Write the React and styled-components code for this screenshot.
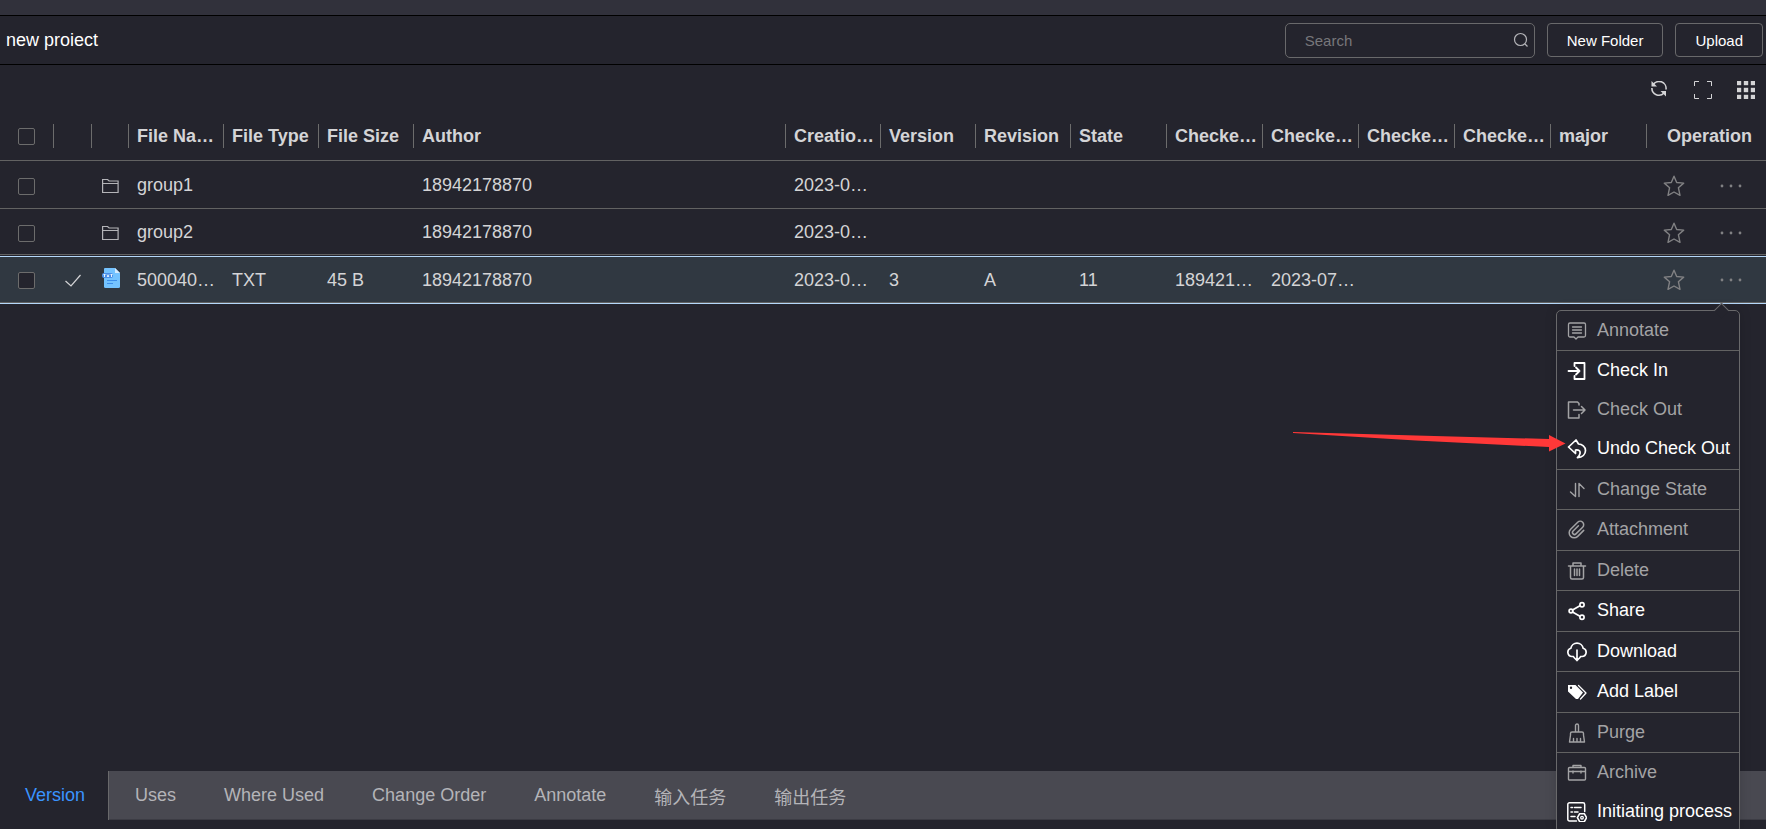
import React from 'react'
import styled, { createGlobalStyle, css } from 'styled-components'

const columns = [
  { key: 'name', label: 'File Na…', width: 95 },
  { key: 'type', label: 'File Type', width: 95 },
  { key: 'size', label: 'File Size', width: 95 },
  { key: 'author', label: 'Author' },
  { key: 'created', label: 'Creatio…', width: 95 },
  { key: 'version', label: 'Version', width: 95 },
  { key: 'revision', label: 'Revision', width: 95 },
  { key: 'state', label: 'State', width: 96 },
  { key: 'checkedBy', label: 'Checke…', width: 96 },
  { key: 'checkedAt', label: 'Checke…', width: 96 },
  { key: 'checkedIn', label: 'Checke…', width: 96 },
  { key: 'checkedNote', label: 'Checke…', width: 96 },
  { key: 'major', label: 'major', width: 96 },
]

const files = [
  { id: 1, kind: 'folder', name: 'group1', author: '18942178870', created: '2023-0…' },
  { id: 2, kind: 'folder', name: 'group2', author: '18942178870', created: '2023-0…' },
  {
    id: 3,
    kind: 'txt',
    selected: true,
    name: '500040…',
    type: 'TXT',
    size: '45 B',
    author: '18942178870',
    created: '2023-0…',
    version: '3',
    revision: 'A',
    state: '11',
    checkedBy: '189421…',
    checkedAt: '2023-07…',
  },
]

const menuGroups = [
  [{ label: 'Annotate', icon: 'annotate', disabled: true }],
  [
    { label: 'Check In', icon: 'checkIn' },
    { label: 'Check Out', icon: 'checkOut', disabled: true },
    { label: 'Undo Check Out', icon: 'undo' },
  ],
  [{ label: 'Change State', icon: 'state', disabled: true }],
  [{ label: 'Attachment', icon: 'attachment', disabled: true }],
  [{ label: 'Delete', icon: 'trash', disabled: true }],
  [{ label: 'Share', icon: 'share' }],
  [{ label: 'Download', icon: 'download' }],
  [{ label: 'Add Label', icon: 'label' }],
  [{ label: 'Purge', icon: 'purge', disabled: true }],
  [
    { label: 'Archive', icon: 'archive', disabled: true },
    { label: 'Initiating process', icon: 'process' },
  ],
]

const tabs = ['Version', 'Uses', 'Where Used', 'Change Order', 'Annotate', '输入任务', '输出任务']

// 20x20 drawings for the context menu
const menuIcons = {
  annotate: (
    <>
      <path d="M3 2h14a1.500 1.500 0 0 1 1.500 1.500v11a1.500 1.500 0 0 1-1.500 1.500h-6l-2 2-2-2H3a1.500 1.500 0 0 1-1.500-1.500v-11A1.500 1.500 0 0 1 3 2z" />
      <path d="M5.500 6h9M5.500 9h9M5.500 12h9" />
    </>
  ),
  checkIn: (
    <path strokeWidth="1.800" d="M7.500 5V2h10v16h-10v-3M1.500 10h11M9 6.500l3.500 3.500L9 13.500" />
  ),
  checkOut: (
    <path strokeWidth="1.500" d="M12 5V3.500L10.500 2h-9v16h10.500v-3.500M6.500 10H18M14.500 6.500L18 10l-3.500 3.500" />
  ),
  undo: (
    <path
      strokeWidth="1.700"
      d="M9 1L1.500 8l7 6.500v-3.500c3.500-.3 5 1 4.500 3.500-.3 1.500-1 2.700-2.500 4.200 5-.5 8-3.500 8-7.200 0-4-3.500-6.300-7-6.500z"
    />
  ),
  state: <path strokeWidth="1.400" d="M8.500 3.500v13L3.500 12M12 16.500v-13l5 5" />,
  attachment: (
    <path
      transform="rotate(45 10 10)"
      strokeWidth="1.500"
      d="M15 5.500v8.500a5 5 0 0 1-10 0V4a3.500 3.500 0 0 1 7 0v9.500a2 2 0 0 1-4 0V6"
    />
  ),
  trash: (
    <path
      strokeWidth="1.500"
      d="M1.500 5h17M6 5V2h8v3M3.500 5v11.500a1.500 1.500 0 0 0 1.500 1.500h10a1.500 1.500 0 0 0 1.500-1.500V5M7.500 8v6.500M10 8v6.500M12.500 8v6.500"
    />
  ),
  share: (
    <>
      <path strokeWidth="1.700" d="M5.500 9l7-4M5.500 11l7 4" />
      <circle cx="4" cy="10" r="1.900" strokeWidth="1.700" />
      <circle cx="15" cy="3.700" r="2.100" strokeWidth="1.700" />
      <circle cx="15" cy="16.300" r="2.100" strokeWidth="1.700" />
    </>
  ),
  download: (
    <path
      strokeWidth="1.700"
      d="M6.500 14.500H5A4.200 4.200 0 0 1 3.800 6.300 6.300 6.300 0 0 1 16.200 6.300 4.200 4.200 0 0 1 15 14.500h-1.500M10 8v10.500M7 15.500l3 3 3-3"
    />
  ),
  label: (
    <>
      <path
        fill="currentColor"
        stroke="none"
        fillRule="evenodd"
        d="M1 3h7.500l7.500 7.500-5 6.500L9 17 1 9.500zM4 4.500a1.200 1.200 0 1 0 0 2.400 1.200 1.200 0 0 0 0-2.400z"
      />
      <path strokeWidth="1.300" d="M11.500 3.500l7.500 7.500-5.500 6" />
    </>
  ),
  purge: (
    <path
      strokeWidth="1.400"
      d="M8.500 9V2.500a1.500 1.500 0 0 1 3 0V9M3.500 12V10.500A1.500 1.500 0 0 1 5 9h10a1.500 1.500 0 0 1 1.500 1.500V12M3.500 12L2.500 19h15L16.500 12M6.500 19v-3.500M10 19v-3.500M13.500 19v-3.500"
    />
  ),
  archive: (
    <path
      strokeWidth="1.400"
      d="M2.500 4.500h15a1 1 0 0 1 1 1V16a1 1 0 0 1-1 1h-15a1 1 0 0 1-1-1V5.500a1 1 0 0 1 1-1zM6 4.500V2.500h8v2M1.500 8.500h17M6 8v2M14 8v2"
    />
  ),
  process: (
    <>
      <path
        strokeWidth="1.500"
        d="M9.500 19H2.500A1.700 1.700 0 0 1 .8 17.300V2.500A1.700 1.700 0 0 1 2.500.8h13.500a1.700 1.700 0 0 1 1.700 1.700V9.500M4 5.500h1.500M7.500 5.500h6.500M4 10h1.500M7.500 10h3.500M4 14.500h4"
      />
      <path strokeWidth="1.600" d="M12.700 11.700h4.600l2.300 4-2.300 4h-4.600l-2.300-4z" />
      <circle cx="15" cy="15.700" r="1.300" />
    </>
  ),
}

export default function App() {
  return (
    <Page>
      <GlobalStyle />
      <TopStrip />
      <TitleBar>
        <Title>new proiect</Title>
        <Actions>
          <SearchBox>
            <SearchInput type="text" placeholder="Search" aria-label="Search" />
            <SearchIcon viewBox="0 0 16 16">
              <circle cx="7.500" cy="7.500" r="6" />
              <path d="M12 12l2.500 2.500" />
            </SearchIcon>
          </SearchBox>
          <BarButton type="button">New Folder</BarButton>
          <BarButton type="button">Upload</BarButton>
        </Actions>
      </TitleBar>

      <Tools>
        <ToolButton type="button" aria-label="Refresh">
          <ToolIcon viewBox="0 0 18 18">
            <path strokeWidth="1.600" d="M2 4A7 7 0 0 1 15 8.500M.9 7A7 7 0 0 0 13 12" />
            <path fill="#d4d4d6" stroke="none" d="M.5 0v5.500H6zM15 15.500V10H9.500z" />
          </ToolIcon>
        </ToolButton>
        <ToolButton type="button" aria-label="Full screen">
          <ToolIcon viewBox="0 0 18 18">
            <path d="M.5 5V.5H5M13 .5h4.500V5M17.500 13v4.500H13M5 17.500H.5V13" />
          </ToolIcon>
        </ToolButton>
        <ToolButton type="button" aria-label="Columns">
          <ToolIcon viewBox="0 0 18 18">
            {[0, 7, 14].map((y) =>
              [0, 7, 14].map((x) => (
                <rect key={x + '-' + y} x={x} y={y} width="4" height="4" fill="#d4d4d6" strokeWidth=".4" />
              ))
            )}
          </ToolIcon>
        </ToolButton>
      </Tools>

      <FileTable>
        <colgroup>
          <Col $width={54} />
          <Col $width={38} />
          <Col $width={37} />
          {columns.map((col) => (
            <Col key={col.key} $width={col.width} />
          ))}
          <Col $width={119} />
        </colgroup>
        <thead>
          <tr>
            <HeadCell $center>
              <CheckBox type="checkbox" aria-label="Select all" />
            </HeadCell>
            <HeadCell />
            <HeadCell />
            {columns.map((col) => (
              <HeadCell key={col.key}>{col.label}</HeadCell>
            ))}
            <HeadCell $last>Operation</HeadCell>
          </tr>
        </thead>
        <tbody>
          {files.map((file) => (
            <Row key={file.id} $selected={file.selected}>
              <Cell $center>
                <CheckBox type="checkbox" aria-label={'Select ' + file.name} />
              </Cell>
              <Cell $center>{file.selected && <CheckMark />}</Cell>
              <Cell $center>{file.kind === 'folder' ? <FolderIcon /> : <TxtIcon />}</Cell>
              {columns.map((col) => (
                <Cell key={col.key}>{file[col.key]}</Cell>
              ))}
              <OperationCell>
                <Operations>
                  <RowButton type="button" aria-label="Favorite">
                    <StarIcon />
                  </RowButton>
                  <RowButton type="button" aria-label="More">
                    <DotsIcon />
                  </RowButton>
                </Operations>
                {file.selected && <ContextMenu />}
              </OperationCell>
            </Row>
          ))}
        </tbody>
      </FileTable>

      <TabBar>
        {tabs.map((tab, i) => (
          <Tab key={tab} type="button" $active={i === 0}>
            {tab}
          </Tab>
        ))}
      </TabBar>
    </Page>
  )
}

function ContextMenu() {
  return (
    <Menu>
      {menuGroups.map((group) => (
        <MenuGroup key={group[0].label}>
          {group.map((item) => (
            <MenuItem key={item.label} type="button" disabled={item.disabled}>
              <MenuIcon viewBox="0 0 20 20">{menuIcons[item.icon]}</MenuIcon>
              {item.label}
            </MenuItem>
          ))}
        </MenuGroup>
      ))}
      <Pointer viewBox="0 0 274 20">
        <path d="M1 0L124 3.500L257 7V3L273.500 11.500L257 19.500V15L124 8.500L1 1Z" />
      </Pointer>
    </Menu>
  )
}

function CheckMark() {
  return (
    <SmallIcon viewBox="0 0 18 18">
      <path d="M1.500 10l5.500 5L16.500 4" />
    </SmallIcon>
  )
}

function FolderIcon() {
  return (
    <SmallIcon viewBox="0 0 18 18">
      <path stroke="#b4b4b8" d="M.6 15.500v-13h5l1.500 1.500h9v11.500zM.6 6.500h15.500" />
    </SmallIcon>
  )
}

function TxtIcon() {
  return (
    <FileIcon viewBox="0 0 18 20">
      <path fill="#74c3ff" d="M3 0h10l5 5v13.500a1.500 1.500 0 0 1-1.500 1.500H3.500A1.500 1.500 0 0 1 2 18.500V1a1 1 0 0 1 1-1z" />
      <path fill="#d5ecff" d="M13 0l5 5h-5z" />
      <rect x="0" y="5" width="11" height="5" rx="2" fill="#4a8fe8" />
      <path stroke="#e8f4ff" fill="none" d="M1.500 6.500h2M2.500 6.500v2.500M5 6.500l2 2.500M7 6.500L5 9M8.500 6.500h2M9.500 6.500v2.500" />
      <path stroke="#3b8eea" fill="none" d="M5 12.500h10M5 15.500h6" />
    </FileIcon>
  )
}

function StarIcon() {
  return (
    <OpIcon viewBox="0 0 22 22">
      <path d="M11 1.200l2.700 6.300 7 .6-5.300 4.600 1.600 7.600-6-3.300-6 3.300 1.600-7.600L1.300 8.100l7-.6z" />
    </OpIcon>
  )
}

function DotsIcon() {
  return (
    <OpIcon viewBox="0 0 22 22">
      <circle cx="2" cy="11" r="1.400" />
      <circle cx="11" cy="11" r="1.400" />
      <circle cx="20" cy="11" r="1.400" />
    </OpIcon>
  )
}


const GlobalStyle = createGlobalStyle`
  * {
    box-sizing: border-box;
  }
  body {
    margin: 0;
    background: #24242d;
  }
  button, input {
    font-family: inherit;
  }
`

const Page = styled.div`
  display: flex;
  flex-direction: column;
  height: 100vh;
  padding-bottom: 9px;
  overflow: hidden;
  background: #24242d;
  color: #d4d4d6;
  font-family: "Liberation Sans", Arial, "Noto Sans CJK SC", sans-serif;
  font-size: 18px;
`

const TopStrip = styled.div`
  flex: none;
  height: 15px;
  background: #31313b;
`

const TitleBar = styled.header`
  flex: none;
  display: flex;
  align-items: center;
  justify-content: space-between;
  height: 50px;
  padding: 0 3px 0 6px;
  border-top: 1px solid #000000;
  border-bottom: 1px solid #000000;
`

const Title = styled.h1`
  margin: 0;
  font-size: 18px;
  font-weight: 400;
  color: #ffffff;
`

const Actions = styled.div`
  display: flex;
  align-items: center;
  gap: 12px;
`

const SearchBox = styled.div`
  display: flex;
  align-items: center;
  width: 250px;
  height: 35px;
  padding: 0 5px 0 19px;
  border: 1px solid #69696b;
  border-radius: 5px;
`

const SearchInput = styled.input`
  flex: 1;
  min-width: 0;
  padding: 0;
  border: none;
  outline: none;
  background: transparent;
  color: #ffffff;
  font-size: 15px;
  &::placeholder {
    color: #77777b;
    opacity: 1;
  }
`

const SearchIcon = styled.svg`
  width: 16px;
  height: 16px;
  fill: none;
  stroke: #b4b4b8;
  stroke-width: 1.2;
`

const BarButton = styled.button`
  height: 34px;
  padding: 0 19px;
  border: 1px solid #69696b;
  border-radius: 4px;
  background: transparent;
  color: #ffffff;
  font-size: 15px;
`

const Tools = styled.div`
  flex: none;
  display: flex;
  align-items: center;
  justify-content: flex-end;
  gap: 25px;
  height: 46px;
  padding: 4px 11px 0 0;
`

const ToolButton = styled.button`
  display: flex;
  padding: 0;
  border: none;
  background: transparent;
`

const ToolIcon = styled.svg`
  width: 18px;
  height: 18px;
  fill: none;
  stroke: #d4d4d6;
`

const FileTable = styled.table`
  flex: none;
  width: 100%;
  table-layout: fixed;
  border-collapse: separate;
  border-spacing: 0;
`

const Col = styled.col`
  width: ${({ $width }) => ($width ? $width + 'px' : 'auto')};
`

const HeadCell = styled.th`
  position: relative;
  height: 50px;
  padding: 1px 0 0 8px;
  border-bottom: 1px solid #626262;
  font-weight: 700;
  text-align: left;
  white-space: nowrap;
  ${({ $center }) => $center && css`
    padding: 2px 0 0;
    text-align: center;
  `}
  ${({ $last }) => $last && css`
    padding-left: 20px;
  `}
  &:not(:last-child)::after {
    content: '';
    position: absolute;
    top: 13px;
    right: 0;
    width: 1px;
    height: 24px;
    background: #6c6c6c;
  }
`

const Cell = styled.td`
  height: 48px;
  padding: 2px 0 0 8px;
  border-bottom: 1px solid #626262;
  white-space: nowrap;
  ${({ $center }) => $center && css`
    padding: 3px 0 0;
    text-align: center;
  `}
`

const OperationCell = styled(Cell)`
  position: relative;
  padding: 3px 0 0;
`

const Row = styled.tr`
  &:nth-child(even) ${Cell} {
    height: 46px;
  }
  ${({ $selected }) => $selected && css`
    ${Cell} {
      height: 49px;
      padding-top: 0;
      border-top: 1px solid #24242d;
      border-bottom: none;
      background: #303841;
      background-clip: padding-box;
      box-shadow: inset 0 1px #b5d8fa, inset 0 -1px #b5d8fa, inset 0 -2px #626262;
    }
  `}
`

const CheckBox = styled.input`
  display: block;
  width: 17px;
  height: 17px;
  margin: 0 0 0 18px;
  appearance: none;
  border: 1px solid #6c6c6c;
  border-radius: 2px;
  background: #24242d;
`

const SmallIcon = styled.svg`
  display: block;
  width: 18px;
  height: 18px;
  margin: 0 auto;
  fill: none;
  stroke: #d4d4d6;
  stroke-width: 1.2;
`

const FileIcon = styled.svg`
  display: block;
  width: 18px;
  height: 20px;
  margin: 0 auto 4px;
`

const Operations = styled.div`
  display: flex;
  align-items: center;
  gap: 35px;
  padding-left: 16px;
`

const RowButton = styled.button`
  display: flex;
  padding: 0;
  border: none;
  background: transparent;
  color: #818183;
`

const OpIcon = styled.svg`
  width: 22px;
  height: 22px;
  fill: none;
  stroke: currentColor;
  stroke-width: 1.4;
  stroke-linejoin: round;
  circle {
    fill: currentColor;
    stroke: none;
  }
`

const Menu = styled.div`
  position: absolute;
  z-index: 2;
  top: calc(100% + 6px);
  right: 26px;
  width: 184px;
  border: 1px solid #69696b;
  border-radius: 5px;
  background: #24242d;
  box-shadow: 0 0 12px rgba(0, 0, 0, 0.15);
  &::before {
    content: '';
    position: absolute;
    top: -6px;
    right: 12px;
    width: 10px;
    height: 10px;
    border-top: 1px solid #69696b;
    border-left: 1px solid #69696b;
    background: #24242d;
    transform: rotate(45deg);
  }
`

const MenuGroup = styled.div`
  position: relative;
  & + & {
    border-top: 1px solid #626262;
  }
  &:nth-child(even) {
    padding-bottom: 1px;
  }
`

const MenuItem = styled.button`
  display: flex;
  align-items: center;
  gap: 10px;
  width: 100%;
  height: 39px;
  padding: 0 0 0 10px;
  border: none;
  background: transparent;
  color: #ffffff;
  font-size: 18px;
  white-space: nowrap;
  &:disabled {
    color: #a3a3a5;
  }
`

const MenuIcon = styled.svg`
  flex: none;
  width: 20px;
  height: 20px;
  fill: none;
  stroke: currentColor;
  stroke-width: 1.3;
  stroke-linecap: round;
  stroke-linejoin: round;
`

const Pointer = styled.svg`
  position: absolute;
  top: 121px;
  right: 173px;
  width: 274px;
  height: 20px;
  fill: #ff3838;
`

const TabBar = styled.nav`
  flex: none;
  display: flex;
  height: 49px;
  margin-top: auto;
  background: #494951;
  box-shadow: inset 0 -1px #3c3c44;
`

const Tab = styled.button`
  padding: 0 24px;
  border: none;
  background: transparent;
  color: #b4b4b8;
  font-size: 18px;
  ${({ $active }) => $active && css`
    margin-right: 2px;
    padding: 0 23px 0 25px;
    border-right: 1px solid #69696b;
    background: #24242d;
    color: #3a94ff;
  `}
`
